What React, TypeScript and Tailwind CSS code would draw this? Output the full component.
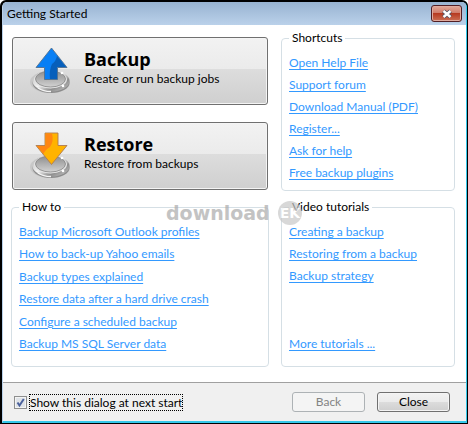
import { useState } from "react";
import type { ReactNode } from "react";

const shortcuts = [
  "Open Help File",
  "Support forum",
  "Download Manual (PDF)",
  "Register...",
  "Ask for help",
  "Free backup plugins",
];
const howTo = [
  "Backup Microsoft Outlook profiles",
  "How to back-up Yahoo emails",
  "Backup types explained",
  "Restore data after a hard drive crash",
  "Configure a scheduled backup",
  "Backup MS SQL Server data",
];
const videos = ["Creating a backup", "Restoring from a backup", "Backup strategy"];

function LinkItem({ children, last = false }: { children: ReactNode; last?: boolean }) {
  return (
    <li className={last ? "mt-auto h-[22px]" : "h-[22px]"}>
      <a href="#" className="whitespace-nowrap text-[#3399ff] underline underline-offset-2">
        {children}
      </a>
    </li>
  );
}

function Group({ title, className, list, children }: { title: string; className: string; list: string; children: ReactNode }) {
  return (
    <fieldset className={`min-w-0 rounded-[4px] border border-[#d5dfe5] px-[7px] pt-[6px] ${className}`}>
      <legend className="h-4 px-[3px] leading-4">{title}</legend>
      <ul className={`flex flex-col leading-[22px] ${list}`}>{children}</ul>
    </fieldset>
  );
}

function Dish() {
  return (
    <>
      <defs>
        <linearGradient id="rim" x1="0" y1="0" x2="1" y2="1">
          <stop offset="0" stopColor="#a5a5a5" />
          <stop offset="0.45" stopColor="#f4f4f4" />
          <stop offset="0.7" stopColor="#8d8d8d" />
          <stop offset="1" stopColor="#d0d0d0" />
        </linearGradient>
        <linearGradient id="well" x1="0" y1="0" x2="0" y2="1">
          <stop offset="0" stopColor="#8e8e8e" />
          <stop offset="1" stopColor="#d2d2d2" />
        </linearGradient>
      </defs>
      <ellipse cx="20" cy="35" rx="20" ry="11" fill="#bdbdbd" opacity="0.6" />
      <ellipse cx="21" cy="36" rx="18.5" ry="10" fill="#8c8c8c" />
      <ellipse cx="21" cy="34" rx="18.5" ry="10.5" fill="url(#rim)" />
      <ellipse cx="20.5" cy="32.5" rx="16.5" ry="9" fill="#e4e4e4" />
      <ellipse cx="20.5" cy="32" rx="15" ry="8" fill="url(#well)" stroke="#858585" strokeWidth="0.8" />
      <path d="M8 41q5 3.500 13 3.500" fill="none" stroke="#f5f5f5" strokeWidth="1.500" />
      <circle cx="32" cy="26" r="1.300" fill="#fff" />
      <circle cx="33" cy="39" r="1.300" fill="#fff" />
    </>
  );
}

function BackupIcon() {
  return (
    <svg viewBox="0 0 42 48" className="h-12 w-[42px] shrink-0" aria-hidden="true">
      <Dish />
      <path d="M21.500 1 L37 20.500 H27.500 V32.500 H14.500 V20.500 H6 Z" fill="#087ff5" stroke="#55708c" strokeWidth="0.900" />
      <path d="M27 9 L36 20 H27 V32 H20 Q19 23 22 17 Q26 14 27 9Z" fill="#0757ad" opacity="0.8" />
    </svg>
  );
}

function RestoreIcon() {
  return (
    <svg viewBox="0 0 42 48" className="h-12 w-[42px] shrink-0" aria-hidden="true">
      <Dish />
      <path d="M15 1 H28 V13.500 H37 L21.500 32.500 L6 13.500 H15 Z" fill="#ffb300" stroke="#ad7a55" strokeWidth="0.900" />
      <path d="M15.500 1.500 H22 Q24 9 20 15 Q15 18 13.500 22 L7 14 H15.500Z" fill="#ff8614" />
    </svg>
  );
}

function ActionButton({ icon, title, text }: { icon: ReactNode; title: string; text: string }) {
  return (
    <button
      type="button"
      className="flex h-[68px] w-full items-center rounded-[3px] border border-[#707070] bg-[linear-gradient(#f2f2f2_0%,#ebebeb_47%,#dddddd_47%,#cfcfcf_100%)] pl-[17px] text-left shadow-[inset_0_0_0_1px_#f4f4f4]"
    >
      {icon}
      <span className="ml-3 flex flex-col pb-2">
        <span className="font-['Open_Sans','Noto_Sans',sans-serif] text-[18px] leading-6 font-bold">{title}</span>
        <span className="leading-4">{text}</span>
      </span>
    </button>
  );
}

function Watermark() {
  return (
    <div className="pointer-events-none absolute top-[199px] left-[164px] flex items-center gap-[6px] opacity-70" aria-hidden="true">
      <span className="w-[106px] font-['DejaVu_Sans',sans-serif] text-[19px] leading-6 font-bold text-[#ababab]">download</span>
      <span className="flex size-6 items-center justify-center rounded-full bg-[#c8c8c8] font-['DejaVu_Sans',sans-serif] text-[14px] font-bold text-white">
        EK
      </span>
    </div>
  );
}

export default function App() {
  const [show, setShow] = useState(true);
  return (
    <div className="relative overflow-hidden rounded-t-[6px] border-t-2 border-r border-b border-l-2 border-black bg-black font-['Lato','Open_Sans',sans-serif] text-[12px] text-black">
      <div className="rounded-t-[5px] border-r border-b-2 border-l border-r-[#35c8ea] border-b-[#35c8ea] border-l-[#b9d1ea] bg-white">
        <header className="flex h-[23px] justify-between rounded-t-[4px] bg-linear-to-b from-[#98b3d1] to-[#bad1ea] pr-1 pl-1">
          <h1 className="leading-6">Getting Started</h1>
          <button
            type="button"
            aria-label="Close window"
            className="mt-[3px] flex h-[17px] w-[31px] items-center justify-center rounded-[3px] border border-[#511e24] bg-[linear-gradient(#e2a99a_0%,#cf7a68_48%,#b6381f_48%,#cc7055_100%)] shadow-[inset_0_0_0_1px_#e0aa9e]"
          >
            <svg viewBox="0 0 12 10" className="h-[10px] w-3" aria-hidden="true">
              <path d="M2.500 2 L9.500 8 M9.500 2 L2.500 8" stroke="#535666" strokeWidth="4.200" />
              <path d="M2.500 2 L9.500 8 M9.500 2 L2.500 8" stroke="#fff" strokeWidth="2.400" />
            </svg>
          </button>
        </header>
        <main className="grid grid-cols-[minmax(0,258fr)_minmax(0,174fr)] gap-x-3 gap-y-2 pt-[5px] pr-[11px] pb-[15px] pl-2">
          <div className="flex flex-col gap-[17px] px-px pt-[7px]">
            <ActionButton icon={<BackupIcon />} title="Backup" text="Create or run backup jobs" />
            <ActionButton icon={<RestoreIcon />} title="Restore" text="Restore from backups" />
          </div>
          <Group title="Shortcuts" className="pb-[6px]" list="">
            {shortcuts.map((s) => <LinkItem key={s}>{s}</LinkItem>)}
          </Group>
          <Group title="How to" className="pb-[11px]" list="h-[134px] justify-between">
            {howTo.map((s) => <LinkItem key={s}>{s}</LinkItem>)}
          </Group>
          <Group title="Video tutorials" className="pb-[11px]" list="h-[134px]">
            {videos.map((s) => <LinkItem key={s}>{s}</LinkItem>)}
            <LinkItem last>More tutorials ...</LinkItem>
          </Group>
        </main>
        <footer className="flex h-[39px] items-center justify-between border-t border-[#a0a0a0] bg-[#f0f0f0] pr-4 pl-[11px]">
          <div className="flex items-center gap-[2px]">
            <span className="relative flex size-[13px]">
              <input
                id="show"
                type="checkbox"
                checked={show}
                onChange={(e) => setShow(e.target.checked)}
                className="peer size-[13px] appearance-none border border-[#8e8f8f] bg-[#dfe3e8] shadow-[inset_0_0_0_1px_#f4f4f4]"
              />
              <svg viewBox="0 0 13 13" className="pointer-events-none absolute inset-0 hidden peer-checked:block" aria-hidden="true">
                <path d="M3.500 6.500 L5.500 9.500 L9.800 3" fill="none" stroke="#4b619c" strokeWidth="2" />
              </svg>
            </span>
            <label htmlFor="show" className="border border-dotted border-black leading-[15px] whitespace-nowrap">
              Show this dialog at next start
            </label>
          </div>
          <div className="flex gap-3">
            <button type="button" disabled className="h-5 w-[73px] rounded-[3px] border border-[#adb2b5] bg-[#f4f4f4] leading-4 text-[#838383]">
              Back
            </button>
            <button type="button" className="h-5 w-[73px] rounded-[3px] border border-[#707070] bg-[linear-gradient(#f2f2f2_0%,#ebebeb_48%,#dddddd_48%,#cfcfcf_100%)] leading-4 shadow-[inset_0_0_0_1px_#f4f4f4]">
              Close
            </button>
          </div>
        </footer>
      </div>
      <Watermark />
    </div>
  );
}
